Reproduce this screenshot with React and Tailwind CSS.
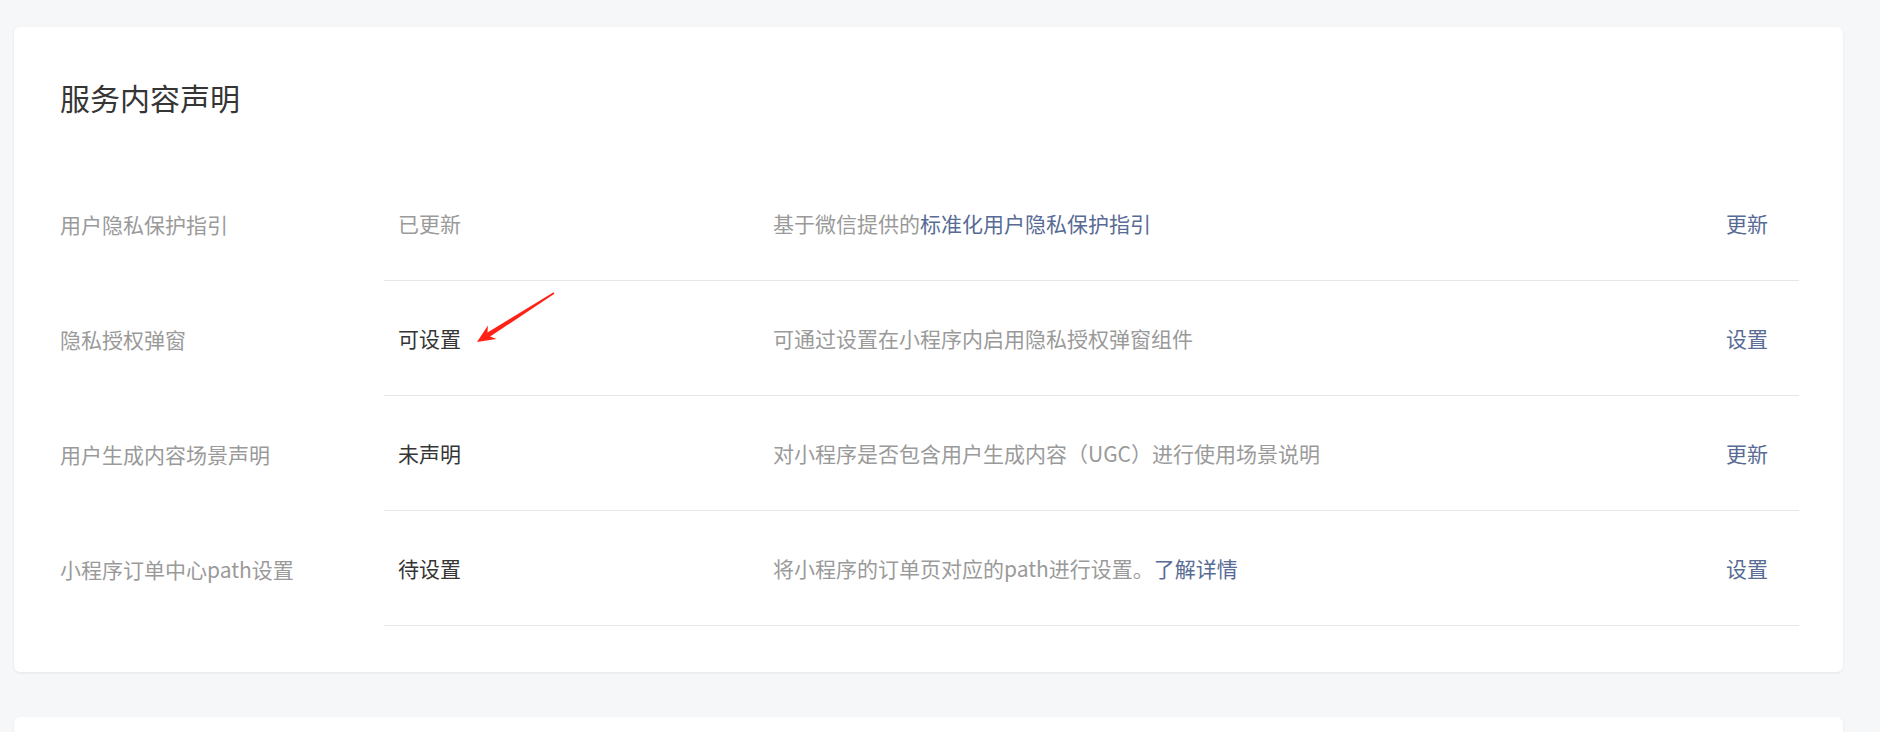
import clsx from 'clsx';

const rows = [
  {
    label: '用户隐私保护指引',
    status: '已更新',
    muted: true,
    desc: '基于微信提供的',
    link: '标准化用户隐私保护指引',
    action: '更新',
  },
  {
    label: '隐私授权弹窗',
    status: '可设置',
    desc: '可通过设置在小程序内启用隐私授权弹窗组件',
    action: '设置',
  },
  {
    label: '用户生成内容场景声明',
    status: '未声明',
    desc: '对小程序是否包含用户生成内容（UGC）进行使用场景说明',
    action: '更新',
  },
  {
    label: '小程序订单中心path设置',
    status: '待设置',
    desc: '将小程序的订单页对应的path进行设置。',
    link: '了解详情',
    action: '设置',
  },
];

function Arrow() {
  return (
    <svg
      className="absolute left-[456px] top-[261px] h-[60px] w-[100px]"
      viewBox="0 0 100 60"
    >
      <polygon
        points="7,54 26.5,51.1 20.1,48.6 84.4,5.7 83.6,4.3 17.5,44.4 17.9,37.5"
        fill="#fe2216"
      />
    </svg>
  );
}

export default function App() {
  return (
    <div className="h-screen overflow-hidden bg-[#f6f7f9] pl-[14px] pr-[37px] pt-[27px] font-['Noto_Sans_CJK_SC','Noto_Sans',sans-serif]">
      {/* 服务内容声明 */}
      <div className="relative rounded-md bg-white pl-[46px] pr-[44px] pt-[50px] pb-[46px] shadow-[0_1px_3px_rgba(0,0,0,0.08)]">
        <h2 className="text-[30px] leading-[40px] font-normal text-[#353535]">
          服务内容声明
        </h2>

        <div className="mt-[49px]">
          {rows.map((r) => (
            <div key={r.label} className="flex text-[21px] leading-[30px]">
              <div className="flex w-[324px] shrink-0 items-center text-[#9a9a9a]">
                {r.label}
              </div>
              <div className="flex h-[115px] flex-1 items-center border-b border-[#e7e7eb] pl-[14px] pr-[31px]">
                <div
                  className={clsx(
                    'w-[375px] shrink-0',
                    r.muted ? 'text-[#9a9a9a]' : 'text-[#353535]'
                  )}
                >
                  {r.status}
                </div>
                <div className="flex-1 text-[#9a9a9a]">
                  {r.desc}
                  {r.link && <a className="text-[#576b95]">{r.link}</a>}
                </div>
                <a className="text-[#576b95]">{r.action}</a>
              </div>
            </div>
          ))}
        </div>

        <Arrow />
      </div>

      {/* next card */}
      <div className="mt-[45px] h-[200px] rounded-md bg-white shadow-[0_1px_3px_rgba(0,0,0,0.08)]" />
    </div>
  );
}
